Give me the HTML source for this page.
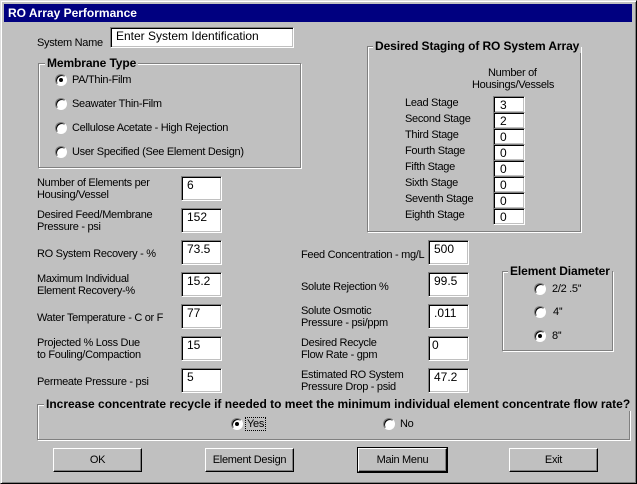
<!DOCTYPE html>
<html><head><style>
*{margin:0;padding:0;box-sizing:border-box}
body{width:637px;height:484px;background:#c0c0c0;font-family:"Liberation Sans",Arial,sans-serif;font-size:11px;color:#000;position:relative;overflow:hidden}
.win{position:absolute;left:0;top:0;width:637px;height:484px;border-top:1px solid #dfdfdf;border-left:1px solid #dfdfdf;border-right:1px solid #000;border-bottom:1px solid #000;box-shadow:inset 1px 1px 0 #fff,inset -1px -1px 0 #808080}
.title{position:absolute;left:4px;top:4px;width:628px;height:18px;background:#000080;color:#fff;font-weight:bold;font-size:12px;line-height:18px;padding-left:4px}
.a{position:absolute;white-space:nowrap;line-height:12px;font-size:11px;letter-spacing:-0.3px}
.tb{position:absolute;background:#fff;border-top:1px solid #808080;border-left:1px solid #808080;border-right:1px solid #fff;border-bottom:1px solid #fff;box-shadow:inset 1px 1px 0 #000,inset -1px -1px 0 #c0c0c0;padding:2px 0 0 5px;line-height:12px;font-size:12px}
.gb{position:absolute;border:1px solid #808080;box-shadow:1px 1px 0 #fff,inset 1px 1px 0 #fff}
.lg{position:absolute;background:#c0c0c0;font-weight:bold;font-size:12px;padding:0 2px;line-height:13px;white-space:nowrap;letter-spacing:-0.1px}
.r{position:absolute;width:12px;height:12px;border-radius:50%;background:#fff;border:1px solid;border-color:#808080 #fff #fff #808080;box-shadow:inset 1px 1px 0 #000}
.r.on::after{content:"";position:absolute;left:3px;top:3px;width:4px;height:4px;border-radius:50%;background:#000}
.btn{position:absolute;width:89px;height:24px;background:#c0c0c0;border:1px solid;border-color:#fff #000 #000 #fff;box-shadow:inset -1px -1px 0 #808080;text-align:center;line-height:22px;font-size:11px;letter-spacing:-0.3px}
.btn.def{outline:1px solid #000}
</style></head><body>
<div class="win"></div>
<div class="title">RO Array Performance</div>

<div class="a" style="left:37px;top:37px">System Name</div>
<div class="tb" style="left:110px;top:27px;width:184px;height:21px">Enter System Identification</div>

<div class="gb" style="left:38px;top:63px;width:263px;height:105px"></div>
<div class="lg" style="left:45px;top:57px">Membrane Type</div>
<div class="r on" style="left:55px;top:74px"></div><div class="a" style="left:72px;top:74px">PA/Thin-Film</div>
<div class="r" style="left:55px;top:98px"></div><div class="a" style="left:72px;top:98px">Seawater Thin-Film</div>
<div class="r" style="left:55px;top:122px"></div><div class="a" style="left:72px;top:122px">Cellulose Acetate - High Rejection</div>
<div class="r" style="left:55px;top:146px"></div><div class="a" style="left:72px;top:146px">User Specified (See Element Design)</div>

<div class="gb" style="left:367px;top:46px;width:214px;height:186px"></div>
<div class="lg" style="left:373px;top:40px">Desired Staging of RO System Array</div>
<div class="a" style="left:488px;top:67px">Number of</div>
<div class="a" style="left:472px;top:79px">Housings/Vessels</div>

<div class="a" style="left:405px;top:97px">Lead Stage</div>
<div class="a" style="left:405px;top:113px">Second Stage</div>
<div class="a" style="left:405px;top:129px">Third Stage</div>
<div class="a" style="left:405px;top:145px">Fourth Stage</div>
<div class="a" style="left:405px;top:161px">Fifth Stage</div>
<div class="a" style="left:405px;top:177px">Sixth Stage</div>
<div class="a" style="left:405px;top:193px">Seventh Stage</div>
<div class="a" style="left:405px;top:209px">Eighth Stage</div>
<div class="tb" style="left:493px;top:96px;width:32px;height:17px;padding-left:6px">3</div>
<div class="tb" style="left:493px;top:112px;width:32px;height:17px;padding-left:6px">2</div>
<div class="tb" style="left:493px;top:128px;width:32px;height:17px;padding-left:6px">0</div>
<div class="tb" style="left:493px;top:144px;width:32px;height:17px;padding-left:6px">0</div>
<div class="tb" style="left:493px;top:160px;width:32px;height:17px;padding-left:6px">0</div>
<div class="tb" style="left:493px;top:176px;width:32px;height:17px;padding-left:6px">0</div>
<div class="tb" style="left:493px;top:192px;width:32px;height:17px;padding-left:6px">0</div>
<div class="tb" style="left:493px;top:208px;width:32px;height:17px;padding-left:6px">0</div>

<div class="a" style="left:37px;top:177px">Number of Elements per<br>Housing/Vessel</div>
<div class="tb" style="left:181px;top:176px;width:41px;height:25px">6</div>
<div class="a" style="left:37px;top:209px">Desired Feed/Membrane<br>Pressure - psi</div>
<div class="tb" style="left:181px;top:208px;width:41px;height:25px">152</div>
<div class="a" style="left:37px;top:248px">RO System Recovery - %</div>
<div class="tb" style="left:181px;top:240px;width:41px;height:25px">73.5</div>
<div class="a" style="left:37px;top:273px">Maximum Individual<br>Element Recovery-%</div>
<div class="tb" style="left:181px;top:272px;width:41px;height:25px">15.2</div>
<div class="a" style="left:37px;top:312px">Water Temperature - C or F</div>
<div class="tb" style="left:181px;top:304px;width:41px;height:25px">77</div>
<div class="a" style="left:37px;top:337px">Projected % Loss Due<br>to Fouling/Compaction</div>
<div class="tb" style="left:181px;top:336px;width:41px;height:25px">15</div>
<div class="a" style="left:37px;top:376px">Permeate Pressure - psi</div>
<div class="tb" style="left:181px;top:368px;width:41px;height:25px">5</div>

<div class="a" style="left:301px;top:249px">Feed Concentration - mg/L</div>
<div class="tb" style="left:428px;top:240px;width:41px;height:25px">500</div>
<div class="a" style="left:301px;top:281px">Solute Rejection %</div>
<div class="tb" style="left:428px;top:272px;width:41px;height:25px">99.5</div>
<div class="a" style="left:301px;top:305px">Solute Osmotic<br>Pressure - psi/ppm</div>
<div class="tb" style="left:428px;top:304px;width:41px;height:25px">.011</div>
<div class="a" style="left:301px;top:337px">Desired Recycle<br>Flow Rate - gpm</div>
<div class="tb" style="left:428px;top:336px;width:41px;height:25px;padding-left:3px">0</div>
<div class="a" style="left:301px;top:369px">Estimated RO System<br>Pressure Drop - psid</div>
<div class="tb" style="left:428px;top:368px;width:41px;height:25px">47.2</div>

<div class="gb" style="left:502px;top:271px;width:111px;height:80px"></div>
<div class="lg" style="left:508px;top:265px">Element Diameter</div>
<div class="r" style="left:534px;top:283px"></div><div class="a" style="left:552px;top:283px">2/2 .5''</div>
<div class="r" style="left:534px;top:306px"></div><div class="a" style="left:553px;top:306px">4''</div>
<div class="r on" style="left:534px;top:330px"></div><div class="a" style="left:552px;top:330px">8''</div>

<div class="gb" style="left:37px;top:404px;width:593px;height:36px"></div>
<div class="lg" style="left:44px;top:398px;letter-spacing:0px">Increase concentrate recycle if needed to meet the minimum individual element concentrate flow rate?</div>
<div class="r on" style="left:231px;top:418px"></div><div class="a" style="left:246px;top:418px;outline:1px dotted #000;padding:0 1px">Yes</div>
<div class="r" style="left:383px;top:418px"></div><div class="a" style="left:400px;top:418px">No</div>

<div class="btn" style="left:53px;top:448px">OK</div>
<div class="btn" style="left:205px;top:448px">Element Design</div>
<div class="btn def" style="left:358px;top:448px">Main Menu</div>
<div class="btn" style="left:509px;top:448px">Exit</div>
</body></html>
